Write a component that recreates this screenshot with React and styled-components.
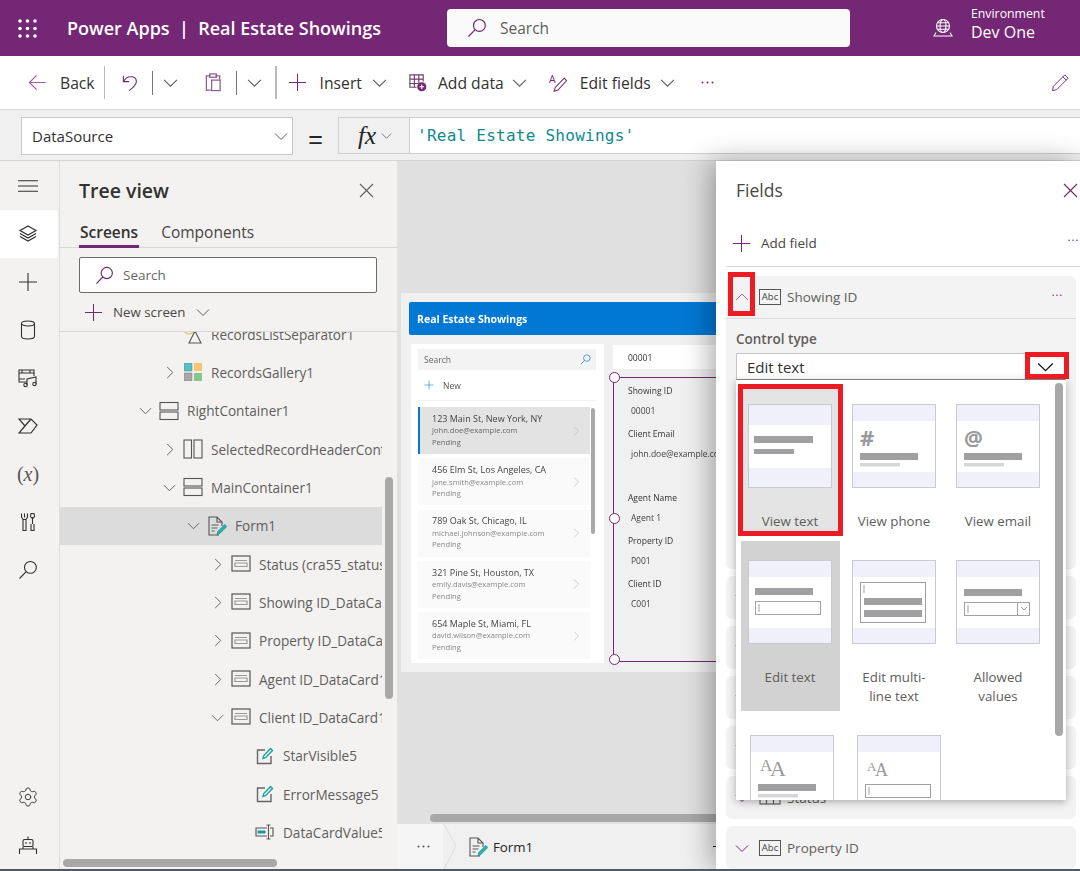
import React from "react";
import styled, { createGlobalStyle } from "styled-components";
import { Settings } from "lucide-react";

const PURPLE = "#742774";
const FONT = '"Open Sans", "Noto Sans", sans-serif';

const GlobalStyle = createGlobalStyle`
  html, body { margin: 0; padding: 0; height: 100%; background: #fff; overflow: hidden; }
  #root { height: 100%; }
  * { box-sizing: border-box; }
`;

// --- icons ---------------------------------------------------------------
const Svg = ({ size = 20, color = "currentColor", width = 1.1, children, box = 20 }) => (
  <svg width={size} height={size} viewBox={`0 0 ${box} ${box}`} fill="none" stroke={color} strokeWidth={width} style={{ flexShrink: 0, display: "block" }}>
    {children}
  </svg>
);

const Waffle = () => (
  <svg width="19" height="19" viewBox="0 0 19 19" fill="#fff" style={{ display: "block" }}>
    {[2, 9.5, 17].map((y) => [2, 9.5, 17].map((x) => <circle key={`${x}${y}`} cx={x} cy={y} r="1.8" />))}
  </svg>
);
const SearchIcon = ({ size, color, width = 1.2 }) => (
  <Svg size={size} color={color} width={width}>
    <circle cx="12.4" cy="7.4" r="5.9" />
    <path d="M8.2 11.6 1.5 18.5" />
  </Svg>
);
const Globe = () => (
  <Svg size={20} color="#fff" width={1.1}>
    <circle cx="10" cy="8" r="6.5" />
    <ellipse cx="10" cy="8" rx="3" ry="6.5" />
    <path d="M3.5 8h13M4.5 4.8h11M4.5 11.2h11M3 14.5l-2 3.5h18l-2-3.5" />
  </Svg>
);
const Chevron = ({ dir = "down", size = 14, color = "#605e5c", width = 1 }) => {
  const d = { down: "M1 4.5l6 6 6-6", up: "M1 10l6-6 6 6", right: "M4.5 1l6 6-6 6" }[dir];
  return (
    <Svg size={size} box={14} color={color} width={width}>
      <path d={d} />
    </Svg>
  );
};
const PlusIcon = ({ size = 19, color = PURPLE }) => (
  <Svg size={size} color={color} width={1.1}>
    <path d="M10 1v18M1 10h18" />
  </Svg>
);
const Close = ({ color = "#605e5c" }) => (
  <Svg size={15} box={15} color={color} width={1.1}>
    <path d="M1 1l13 13M14 1 1 14" />
  </Svg>
);
const Dots = ({ color = "#605e5c", w = 13 }) => (
  <svg width={w} height={(w * 3) / 13} viewBox="0 0 13 3" fill={color} style={{ display: "block" }}>
    <circle cx="1.5" cy="1.5" r="1" />
    <circle cx="6.5" cy="1.5" r="1" />
    <circle cx="11.5" cy="1.5" r="1" />
  </svg>
);
const Back = () => (
  <Svg size={19} color="#9c5f9c" width={1.2}>
    <path d="M18.5 10H1.5M9 2.5 1.5 10 9 17.5" />
  </Svg>
);
const Undo = () => (
  <Svg size={18} color={PURPLE} width={1.2}>
    <path d="M1.5 2v6.5H8M1.8 8.3C3.5 5 6 3 9.5 3c4 0 6.5 2.4 6.5 5.5 0 2.7-2.5 5.5-8 10" />
  </Svg>
);
const Clipboard = () => (
  <Svg size={19} color="#8f5b8f" width={1.3}>
    <path d="M7 3H2.5v15H7M12 3h4.5v4" />
    <rect x="6" y="1" width="7" height="3.5" />
    <rect x="8" y="7.5" width="9" height="11" />
  </Svg>
);
const AddData = () => (
  <Svg size={19} color="#6f3d6f" width={1.2}>
    <path d="M9 15H2V2h14v7M2 6.5h14M2 11h9M6.7 2v13M11.4 2v9" />
    <circle cx="14.5" cy="14.5" r="4.8" fill="#742774" stroke="none" />
    <path d="M14.5 12v5M12 14.5h5" stroke="#fff" />
  </Svg>
);
const EditFieldsIcon = () => (
  <Svg size={19} color={PURPLE} width={1.1}>
    <text x="0" y="10" fontSize="11" fontFamily="Open Sans" fill={PURPLE} stroke="none">A</text>
    <path d="M16 5.5l2.5 2.5-9 10-4 1.2 1-4z" />
  </Svg>
);
const Pen = () => (
  <Svg size={19} color={PURPLE} width={1}>
    <path d="M14.5 2l3.5 3.5L6 17.5 1.5 18.5 2.5 14zM12.5 4l3.5 3.5" />
  </Svg>
);
const Rail = {
  menu: (
    <Svg size={20}>
      <path d="M0 4.7h20M0 10h20M0 15.3h20" />
    </Svg>
  ),
  layers: (
    <Svg size={20} width={1.2}>
      <path d="M10 2 18 6.5 10 11 2 6.5zM2 9.5l8 4.5 8-4.5M2 12.5l8 4.5 8-4.5" />
    </Svg>
  ),
  plus: <PlusIcon size={20} color="#323130" />,
  data: (
    <Svg size={20}>
      <ellipse cx="10" cy="3.5" rx="6.5" ry="2.5" />
      <path d="M3.5 3.5v13c0 1.4 3 2.5 6.5 2.5s6.5-1.1 6.5-2.5v-13" />
    </Svg>
  ),
  media: (
    <Svg size={20}>
      <path d="M9 14H1V2h15v6M1 5h15M1 11h6M4 2v3M12 2v3" />
      <path d="M9 17V11l9-2v7" />
      <circle cx="7.5" cy="17" r="1.7" />
      <circle cx="16.5" cy="16" r="1.7" />
    </Svg>
  ),
  flows: (
    <Svg size={20} width={1.2}>
      <path d="M1 3h12l6 6-6 8H1l6-7zM13 3 6 11M19 9l-6 8" />
    </Svg>
  ),
  tools: (
    <Svg size={20}>
      <path d="M5 8v10.5h3V8M3.5 1.5v3.5L5 7.5h3l1.5-2.5V1.5M6.5 1.5v4" />
      <path d="M13 12v6.5h3V12M14.5 5v7M12.5 4.5l.5-3h3l.5 3-1 1.5h-2z" />
    </Svg>
  ),
  search: <SearchIcon size={20} color="#323130" width={1.1} />,
  robot: (
    <Svg size={20}>
      <path d="M10 1.5v3" />
      <rect x="5" y="4.5" width="10" height="7" rx="1.5" />
      <path d="M7.5 8h1M11.5 8h1" strokeWidth="1.8" />
      <path d="M1.5 19v-5h17v5M5 14v-2.5M15 14v-2.5" />
    </Svg>
  ),
};
const Stack = () => (
  <Svg size={20} color="#555">
    <rect x="1" y="1.5" width="18" height="7.5" />
    <rect x="1" y="11" width="18" height="7.5" />
  </Svg>
);
const Split = () => (
  <Svg size={20} color="#555">
    <rect x="1" y="1" width="7.5" height="18" />
    <rect x="11" y="1" width="8" height="18" />
  </Svg>
);
const Gallery = () => (
  <svg width="18" height="18" viewBox="0 0 18 18" style={{ display: "block", flexShrink: 0 }}>
    <rect width="8" height="8" fill="#4fc3c8" stroke="#777" strokeWidth=".5" />
    <rect x="10" width="8" height="8" fill="#f8c471" />
    <rect y="10" width="8" height="8" fill="#a8a8a8" stroke="#777" strokeWidth=".5" />
    <rect x="10" y="10" width="8" height="8" fill="#86c686" />
  </svg>
);
const Separator = () => (
  <Svg size={20} color="#555">
    <circle cx="6" cy="5" r="5" stroke="#f2b84b" />
    <path d="M6 19 12 7l6 12z" fill="#f3f2f1" />
    <path d="M13 4h5v4" stroke="#1aa5a5" />
  </Svg>
);
const FormIcon = () => (
  <Svg size={20} color="#555">
    <path d="M12 19H2V1h8l5 5v4M10 1v5h5" />
    <path d="M4.5 9h7M4.5 12h6M4.5 15h3" stroke="#888" strokeWidth="1.3" />
    <path d="M10 19l.8-3.5 7-7 2 2-7 7z" fill="#2bb3b3" stroke="#148f8f" strokeWidth=".8" />
  </Svg>
);
const CardIcon = () => (
  <Svg size={20} color="#555" width={1.2}>
    <rect x="1" y="2" width="18" height="15" />
    <path d="M4 6.5h12M4 9h12v3.5H4z" stroke="#999" />
  </Svg>
);
const EditBox = () => (
  <Svg size={18} box={18} color="#666" width={1.4}>
    <path d="M9 3H1.5v13.5H15V9" />
    <path d="M7 11.5l.8-3L14.500 1.500l2 2L9.500 10.700z" stroke="#1aa5a5" />
  </Svg>
);
const InputIcon = () => (
  <Svg size={20} color="#555">
    <path d="M12 6H1v8h11M15 6h3v8h-3" />
    <rect x="2.5" y="8.5" width="8" height="3" fill="#1a9a9a" stroke="none" />
    <path d="M13.5 3v14M11.5 3h4M11.5 17h4" />
  </Svg>
);
const TableIcon = () => (
  <Svg size={22} box={22} color="#555">
    <rect x="1" y="1" width="20" height="16" />
    <path d="M1 7h20M7.5 7v10M14.5 7v10" />
  </Svg>
);
const treeIcons = { separator: Separator, gallery: Gallery, stack: Stack, split: Split, form: FormIcon, card: CardIcon, edit: EditBox, input: InputIcon };

// --- thumbnails in the control type list -----------------------------------
const Thumb = ({ kind }) => {
  const top = kind === "viewText" ? 20 : 16;
  const bottom = kind === "viewText" ? 64 : 68;
  const bar = "#a0a0a2";
  const light = "#d6d6d6";
  return (
    <svg width="84" height="84" viewBox="0 0 84 84" style={{ display: "block", marginLeft: 7 }}>
      <rect x=".5" y=".5" width="83" height="83" fill="#fff" stroke="#c9c9d2" />
      <rect x="1" y="1" width="82" height={top} fill="#f0f0fa" />
      <rect x="1" y={bottom} width="82" height={83 - bottom} fill="#f0f0fa" />
      {kind === "viewText" && (
        <>
          <rect x="6" y="32" width="59" height="7" fill={bar} />
          <rect x="6" y="45" width="40" height="5" fill={bar} />
        </>
      )}
      {(kind === "phone" || kind === "email") && (
        <>
          <text x="8" y="42" fontSize={kind === "phone" ? 22 : 21} fontWeight="700" fontFamily="Open Sans" fill="#9a9a9c">{kind === "phone" ? "#" : "@"}</text>
          <rect x="8" y="49" width="58" height="7" fill={bar} />
          <rect x="8" y="59" width="40" height="3.5" fill={light} />
        </>
      )}
      {kind === "edit" && (
        <>
          <rect x="7" y="28" width="58" height="7" fill={bar} />
          <rect x="7.5" y="41.5" width="65" height="13" fill="#fff" stroke={bar} />
          <path d="M11 44v8" stroke={bar} />
        </>
      )}
      {kind === "multi" && (
        <>
          <rect x="8.5" y="22.5" width="65" height="40" fill="#fff" stroke={bar} />
          <path d="M12 25v8" stroke={bar} />
          <rect x="12" y="38" width="58" height="7" fill={bar} />
          <rect x="12" y="50" width="58" height="7" fill={bar} />
        </>
      )}
      {kind === "allowed" && (
        <>
          <rect x="8" y="29" width="58" height="7" fill={bar} />
          <rect x="8.5" y="42.5" width="65" height="13" fill="#fff" stroke={bar} />
          <path d="M12 45v8M61.5 43v12" stroke={bar} />
          <path d="M65 47l3 3 3-3" stroke={bar} fill="none" />
        </>
      )}
      {kind === "title" && (
        <>
          <text x="10" y="36" fontSize="17" fontFamily="Liberation Serif" fill="#9a9a9c">A</text>
          <text x="20" y="41" fontSize="22" fontFamily="Liberation Serif" fill="#9a9a9c">A</text>
          <rect x="8" y="49" width="58" height="7" fill={bar} />
          <rect x="8" y="59" width="40" height="3.5" fill={light} />
        </>
      )}
      {kind === "titleEdit" && (
        <>
          <text x="10" y="36" fontSize="13" fontFamily="Liberation Serif" fill="#9a9a9c">A</text>
          <text x="18" y="41" fontSize="18" fontFamily="Liberation Serif" fill="#9a9a9c">A</text>
          <rect x="8.5" y="49.5" width="65" height="13" fill="#fff" stroke={bar} />
          <path d="M12 52v8" stroke={bar} />
        </>
      )}
    </svg>
  );
};

// --- page frame --------------------------------------------------------------
const Page = styled.div`
  width: 1080px;
  height: 871px;
  display: flex;
  flex-direction: column;
  overflow: hidden;
  font-family: ${FONT};
  color: #323130;
  border-bottom: 2px solid #505a64;
`;

const Header = styled.header`
  height: 56px;
  flex-shrink: 0;
  background: ${PURPLE};
  color: #fff;
  display: flex;
  align-items: center;
  padding-left: 18px;
`;
const AppTitle = styled.div`
  margin-left: 30px;
  width: 380px;
  font-size: 18px;
  font-weight: 600;
  white-space: pre;
`;
const HeaderSearch = styled.div`
  width: 403px;
  height: 38px;
  background: #fafafa;
  border-radius: 4px;
  display: flex;
  align-items: center;
  gap: 13px;
  padding-left: 20px;
  color: #605e5c;
  font-size: 15.5px;
`;
const EnvIcon = styled.div`
  margin-left: 83px;
`;
const Env = styled.div`
  margin-left: 18px;
  padding-bottom: 7px;
  display: flex;
  flex-direction: column;
`;
const EnvLabel = styled.span`
  font-size: 12.3px;
  line-height: 15px;
`;
const EnvName = styled.span`
  font-size: 16px;
  line-height: 22px;
`;

const Toolbar = styled.div`
  height: 54px;
  flex-shrink: 0;
  display: flex;
  align-items: center;
  padding-left: 28px;
  border-bottom: 1px solid #d6d6d6;
  font-size: 15.7px;
`;
const ToolGroup = styled.div`
  display: flex;
  align-items: center;
  gap: ${(p) => p.$gap || 0}px;
  margin-left: ${(p) => p.$ml || 0}px;
  flex-shrink: 0;
`;
const PenSlot = styled.div`
  margin: 0 10px 0 auto;
`;
const ToolText = styled.span`
  color: #323130;
  margin-right: ${(p) => (p.$tight ? -3 : 0)}px;
`;
const ToolSep = styled.div`
  width: ${(p) => (p.$thin ? 1 : 1.5)}px;
  height: ${(p) => (p.$thin ? 24 : 33)}px;
  background: ${(p) => (p.$thin ? "#777" : "#bbb")};
  margin-left: ${(p) => p.$ml || 0}px;
  flex-shrink: 0;
`;

const FormulaBar = styled.div`
  height: 51px;
  flex-shrink: 0;
  background: #f0f0f0;
  border-bottom: 1px solid #d4d4d4;
  display: flex;
  align-items: flex-start;
  padding: 7px 0 0 21px;
`;
const PropSelect = styled.div`
  width: 272px;
  height: 38px;
  background: #fff;
  border: 1px solid #c8c8c8;
  display: flex;
  align-items: center;
  justify-content: space-between;
  padding: 0 4px 0 10px;
  font-size: 15px;
`;
const Equals = styled.div`
  width: 45px;
  text-align: center;
  font-family: "Liberation Sans", sans-serif;
  font-size: 25px;
  line-height: 44px;
  color: #222;
`;
const FxBox = styled.div`
  width: 72px;
  height: 37px;
  border: 1px solid #cfcfcf;
  display: flex;
  align-items: center;
  gap: 5px;
  padding-left: 19px;
`;
const Fx = styled.span`
  font-family: "Liberation Serif", serif;
  font-style: italic;
  font-size: 25px;
  line-height: 30px;
  color: #222;
`;
const FormulaInput = styled.div`
  flex: 1;
  height: 37px;
  background: #fff;
  border: 1px solid #cfcfcf;
  border-width: 1px 0 1px 0;
  display: flex;
  align-items: center;
  padding-left: 7px;
  font-family: "DejaVu Sans Mono", monospace;
  font-size: 16px;
  letter-spacing: 0.25px;
  color: #0e8a8f;
`;

const Workspace = styled.div`
  flex: 1;
  min-height: 0;
  display: flex;
`;

// --- left rail -----------------------------------------------------------------
const RailBar = styled.nav`
  width: 60px;
  flex-shrink: 0;
  background: #f3f2f1;
  border-right: 1px solid #dedcda;
  display: flex;
  flex-direction: column;
  padding-top: 1px;
`;
const RailItem = styled.div`
  height: 48px;
  width: 58px;
  display: flex;
  align-items: center;
  justify-content: center;
  padding-right: 2px;
  color: #323130;
  background: ${(p) => (p.$active ? "#fff" : "transparent")};
  border-radius: 0 4px 4px 0;
`;
const RailX = styled.span`
  font-family: "Liberation Serif", serif;
  font-size: 20px;
  color: #555;
`;
const RailXVar = styled.i`
  font-weight: 400;
`;
const RailBottom = styled.div`
  margin-top: auto;
`;

// --- tree view ------------------------------------------------------------------
const TreePanel = styled.aside`
  position: relative;
  width: 337px;
  flex-shrink: 0;
  background: #f3f2f1;
  display: flex;
  flex-direction: column;
  min-height: 0;
`;
const PanelHead = styled.div`
  height: 62px;
  flex-shrink: 0;
  display: flex;
  align-items: center;
  justify-content: space-between;
  padding: 0 23px 3px 19px;
`;
const TreeTitle = styled.h2`
  margin: 0;
  font-size: 19.5px;
  font-weight: 600;
  color: #323130;
`;
const Tabs = styled.div`
  height: 25px;
  flex-shrink: 0;
  display: flex;
  gap: 21px;
  padding-left: 19px;
  border-bottom: 1px solid #d9d7d5;
  font-size: 15.5px;
  line-height: 18px;
`;
const Tab = styled.div`
  height: 25px;
  padding: 0 1px;
  color: ${(p) => (p.$active ? "#323130" : "#484644")};
  font-weight: ${(p) => (p.$active ? 600 : 400)};
  border-bottom: ${(p) => (p.$active ? `3px solid ${PURPLE}` : "none")};
`;
const TreeSearch = styled.div`
  height: 36px;
  margin: 9px 20px 0 19px;
  flex-shrink: 0;
  background: #fff;
  border: 1px solid #6b6b6b;
  border-radius: 2px;
  display: flex;
  align-items: center;
  gap: 9px;
  padding-left: 15px;
  font-size: 13.5px;
  color: #666;
`;
const NewScreen = styled.div`
  height: 39px;
  flex-shrink: 0;
  display: flex;
  align-items: center;
  padding-left: 24px;
  border-bottom: 1px solid #d9d7d5;
  font-size: 13.3px;
  color: #484644;
`;
const NewScreenText = styled.span`
  margin: 0 11px 0 10px;
`;
const TreeScroll = styled.div`
  flex: 1;
  min-height: 0;
  width: 322px;
  overflow: hidden;
`;
const TreeList = styled.div`
  margin-top: -17px;
`;
const TreeRow = styled.div`
  height: 38.33px;
  display: flex;
  align-items: center;
  padding-left: ${(p) => 86 + p.$level * 24}px;
  background: ${(p) => (p.$selected ? "#dcdcdc" : "transparent")};
  font-size: 13.6px;
  color: #605e5c;
  white-space: nowrap;
  overflow: hidden;
`;
const ChevSlot = styled.div`
  width: 13px;
  flex-shrink: 0;
  margin-left: -7px;
  margin-right: 7px;
`;
const IconSlot = styled.div`
  width: 20px;
  flex-shrink: 0;
  margin-right: 8px;
  display: flex;
  justify-content: center;
`;
const Thumbnail = styled.div`
  position: absolute;
  background: #a8a8a8;
  border-radius: 4px;
  left: ${(p) => p.$left}px;
  bottom: ${(p) => p.$bottom}px;
  width: ${(p) => p.$w}px;
  height: ${(p) => p.$h}px;
`;

// --- canvas ---------------------------------------------------------------------
const Canvas = styled.main`
  position: relative;
  flex: 1;
  min-width: 0;
  display: flex;
  flex-direction: column;
  overflow: hidden;
  background: #e0e0e0;
`;
const Stage = styled.div`
  flex: 1;
  min-height: 0;
  padding: 132px 0 0 4px;
  overflow: hidden;
`;
const Preview = styled.div`
  width: 700px;
  height: 379px;
  background: #f0f0f0;
  padding: 9px 0 0 8px;
  filter: blur(0.3px);
`;
const PreviewBar = styled.div`
  height: 33px;
  background: #0078d4;
  color: #fff;
  border-radius: 2px 0 0 2px;
  display: flex;
  align-items: center;
  padding-left: 8px;
  font-size: 10.5px;
  font-weight: 700;
`;
const PreviewBody = styled.div`
  display: flex;
  gap: 9px;
  margin: 9px 0 0 2px;
`;
const RecordPane = styled.div`
  width: 193px;
  height: 319px;
  background: #fff;
  padding: 5px 8px 0 7px;
  overflow: hidden;
`;
const PreviewSearch = styled.div`
  height: 21px;
  background: #f3f3f3;
  display: flex;
  align-items: center;
  justify-content: space-between;
  padding: 0 5px 0 6px;
  font-size: 8.5px;
  color: #666;
`;
const PreviewNew = styled.div`
  height: 31px;
  display: flex;
  align-items: center;
  gap: 9px;
  padding-left: 6px;
  font-size: 8.5px;
  color: #555;
  border-bottom: 1px solid #f3f3f3;
`;
const RecordList = styled.div`
  position: relative;
  margin-top: 6px;
  display: flex;
  flex-direction: column;
  gap: 4.3px;
`;
const RecordItem = styled.div`
  width: 172px;
  height: 47px;
  flex-shrink: 0;
  display: flex;
  align-items: center;
  justify-content: space-between;
  padding: 0 9px 0 12px;
  background: ${(p) => (p.$active ? "#e3e3e3" : "#fafafa")};
  border-left: 2px solid ${(p) => (p.$active ? "#0078d4" : "transparent")};
`;
const RecordTitle = styled.div`
  font-size: 9px;
  line-height: 12.5px;
  color: #444;
  white-space: nowrap;
`;
const RecordSub = styled.div`
  font-size: 7.6px;
  line-height: 11.5px;
  color: ${(p) => (p.$active ? "#666" : "#888")};
`;
const ListScroll = styled.div`
  position: absolute;
  top: 1px;
  left: 173px;
  width: 4px;
  height: 126px;
  background: #a8a8a8;
  border-radius: 2px;
`;
const DetailPane = styled.div`
  flex: 1;
`;
const DetailTitle = styled.div`
  height: 24px;
  margin-top: 1px;
  background: #fff;
  display: flex;
  align-items: center;
  padding-left: 15px;
  font-size: 8.5px;
  color: #333;
`;
const FormBox = styled.div`
  position: relative;
  height: 285px;
  margin-top: 8px;
  border: 1px solid ${PURPLE};
  padding: 3px 0 0 14px;
`;
const Handle = styled.div`
  position: absolute;
  left: -5px;
  top: ${(p) => p.$top}px;
  width: 11px;
  height: 11px;
  border-radius: 50%;
  background: #fff;
  border: 1.3px solid ${PURPLE};
`;
const FormField = styled.div`
  height: ${(p) => (p.$tall ? 64 : 43)}px;
  font-size: 8.5px;
  color: #333;
`;
const FieldLabel = styled.div`
  line-height: 20px;
`;
const FieldValue = styled.div`
  line-height: 20px;
  padding-left: 3px;
  color: #444;
  white-space: nowrap;
`;
const CanvasBar = styled.div`
  position: absolute;
  left: 33px;
  right: 0;
  bottom: 47px;
  height: 8px;
  background: #a8a8a8;
  border-radius: 4px 0 0 4px;
`;
const BottomBar = styled.div`
  height: 45px;
  flex-shrink: 0;
  background: #f0f0f0;
  display: flex;
  align-items: center;
`;
const Crumb = styled.div`
  width: 46px;
  height: 45px;
  background: #f5f5f5;
  display: flex;
  align-items: center;
  justify-content: center;
  padding-left: 6px;
`;
const CrumbArrow = styled.svg`
  display: block;
  flex-shrink: 0;
`;
const CrumbName = styled.div`
  display: flex;
  align-items: center;
  gap: 5px;
  margin-left: 11px;
  font-size: 13.3px;
  color: #252423;
`;
const ZoomMark = styled.div`
  margin-left: auto;
  width: 3px;
  height: 1px;
  background: #222;
`;

// --- fields panel -----------------------------------------------------------------
const FieldsPanel = styled.aside`
  position: relative;
  z-index: 2;
  width: 364px;
  flex-shrink: 0;
  background: #fff;
  box-shadow: -6px 0 26px rgba(0, 0, 0, 0.32);
  padding: 0 4px 0 10px;
  overflow: hidden;
  display: flex;
  flex-direction: column;
`;
const FieldsHead = styled.div`
  height: 62px;
  flex-shrink: 0;
  display: flex;
  align-items: center;
  justify-content: space-between;
  padding: 0 2px 4px 10px;
  margin-right: -4px;
  font-size: 17.5px;
  color: #484644;
`;
const AddField = styled.div`
  height: 44px;
  flex-shrink: 0;
  margin: 0 -4px 9px 0;
  padding: 0 2px 3px 6px;
  display: flex;
  align-items: center;
  border-bottom: 1px solid #d6d6d6;
  font-size: 13.5px;
  color: #484644;
`;
const AddFieldText = styled.span`
  margin-left: 10px;
  flex: 1;
`;
const AddFieldDots = styled.div`
  margin-top: -6px;
`;
const FieldCard = styled.section`
  position: relative;
  flex-shrink: 0;
  margin-bottom: 7px;
  background: #f3f3f3;
  border-radius: 6px;
  z-index: ${(p) => (p.$open ? 2 : 1)};
  height: ${(p) => (p.$open ? 293 : 43)}px;
`;
const CardHead = styled.div`
  height: 43px;
  display: flex;
  align-items: center;
  padding: 0 14px 0 9px;
  border-bottom: ${(p) => (p.$open ? "1px solid #dcdcdc" : "none")};
  font-size: 13.5px;
  color: #605e5c;
`;
const AbcBox = styled.div`
  width: 22px;
  height: 16px;
  margin: 0 6px 0 10px;
  border: 1px solid #555;
  font-size: 9.5px;
  line-height: 14px;
  text-align: center;
  color: #444;
  flex-shrink: 0;
`;
const TableSlot = styled.div`
  margin: 0 6px 0 10px;
  flex-shrink: 0;
`;
const CardName = styled.span`
  flex: 1;
`;
const CardDots = styled.div`
  margin-top: -4px;
`;
const ControlLabel = styled.div`
  margin: 11px 0 0 10px;
  font-size: 13.5px;
  line-height: 18px;
  font-weight: 600;
  color: #605e5c;
`;
const ControlSelect = styled.div`
  margin: 5px 0 0 10px;
  width: 330px;
  height: 27px;
  background: #fff;
  border: 1px solid #c6c6c6;
  border-bottom-color: #8a8a8a;
  display: flex;
  align-items: center;
  justify-content: space-between;
  padding: 0 11px 0 10px;
  font-size: 15px;
  color: #323130;
`;
const Highlight = styled.div`
  position: absolute;
  left: ${(p) => p.$left}px;
  top: ${(p) => p.$top}px;
  width: ${(p) => p.$w}px;
  height: ${(p) => p.$h}px;
  border: 5px solid #ed1c24;
  pointer-events: none;
  z-index: 4;
`;
const Popover = styled.div`
  position: absolute;
  left: 10px;
  top: 104px;
  width: 330px;
  height: 420px;
  background: #fff;
  box-shadow: 0 2px 8px rgba(0, 0, 0, 0.3);
  overflow: hidden;
  padding: 5px 0 0 5px;
  z-index: 3;
`;
const PopScroll = styled.div`
  position: absolute;
  left: 319px;
  top: 3px;
  width: 8px;
  height: 353px;
  background: #a8a8a8;
  border-radius: 4px;
`;
const TileGrid = styled.div`
  display: grid;
  grid-template-columns: repeat(3, 99px);
  column-gap: 5px;
  row-gap: 5px;
`;
const Tile = styled.div`
  position: relative;
  padding-top: 19px;
  height: ${(p) => (p.$short ? 151 : 170)}px;
  background: ${(p) => (p.$state === "hover" ? "#e4e4e4" : p.$state === "current" ? "#d2d2d2" : "transparent")};
  margin-left: ${(p) => p.$shift || 0}px;
  width: 99px;
`;
const TileLabel = styled.div`
  margin-top: 24px;
  padding: 0 11px 0 10px;
  font-size: 13.3px;
  line-height: 19px;
  text-align: center;
  color: #605e5c;
`;

const treeRows = [
  { level: 1, icon: "separator", name: "RecordsListSeparator1" },
  { level: 1, icon: "gallery", name: "RecordsGallery1", chev: "right" },
  { level: 0, icon: "stack", name: "RightContainer1", chev: "down" },
  { level: 1, icon: "split", name: "SelectedRecordHeaderContainer1", chev: "right" },
  { level: 1, icon: "stack", name: "MainContainer1", chev: "down" },
  { level: 2, icon: "form", name: "Form1", chev: "down", selected: true },
  { level: 3, icon: "card", name: "Status (cra55_status)_DataCard1", chev: "right" },
  { level: 3, icon: "card", name: "Showing ID_DataCard1", chev: "right" },
  { level: 3, icon: "card", name: "Property ID_DataCard1", chev: "right" },
  { level: 3, icon: "card", name: "Agent ID_DataCard1", chev: "right" },
  { level: 3, icon: "card", name: "Client ID_DataCard1", chev: "down" },
  { level: 4, icon: "edit", name: "StarVisible5" },
  { level: 4, icon: "edit", name: "ErrorMessage5" },
  { level: 4, icon: "input", name: "DataCardValue5" },
];

const records = [
  ["123 Main St, New York, NY", "john.doe@example.com"],
  ["456 Elm St, Los Angeles, CA", "jane.smith@example.com"],
  ["789 Oak St, Chicago, IL", "michael.johnson@example.com"],
  ["321 Pine St, Houston, TX", "emily.davis@example.com"],
  ["654 Maple St, Miami, FL", "david.wilson@example.com"],
];

const formFields = [
  ["Showing ID", "00001"],
  ["Client Email", "john.doe@example.com", true],
  ["Agent Name", "Agent 1"],
  ["Property ID", "P001"],
  ["Client ID", "C001"],
];

const tiles = [
  { kind: "viewText", label: "View text", state: "hover", marked: true, short: true },
  { kind: "phone", label: "View phone", short: true },
  { kind: "email", label: "View email", short: true },
  { kind: "edit", label: "Edit text", state: "current" },
  { kind: "multi", label: "Edit multi-line text" },
  { kind: "allowed", label: "Allowed values" },
  { kind: "title", label: "", shift: 2 },
  { kind: "titleEdit", label: "", shift: 5 },
];

const collapsed = ["Client Email", "Agent Name", "Client ID", "Agent ID", "Status", "Property ID"];

export default function App() {
  return (
    <Page>
      <GlobalStyle />
      <Header>
        <Waffle />
        <AppTitle>Power Apps  |  Real Estate Showings</AppTitle>
        <HeaderSearch>
          <SearchIcon size={20} color={PURPLE} />
          Search
        </HeaderSearch>
        <EnvIcon>
          <Globe />
        </EnvIcon>
        <Env>
          <EnvLabel>Environment</EnvLabel>
          <EnvName>Dev One</EnvName>
        </Env>
      </Header>

      <Toolbar>
        <ToolGroup $gap={13}>
          <Back />
          <ToolText>Back</ToolText>
        </ToolGroup>
        <ToolSep $ml={9} />
        <ToolGroup $ml={17}><Undo /></ToolGroup>
        <ToolSep $thin $ml={12} />
        <ToolGroup $ml={10}><Chevron size={15} /></ToolGroup>
        <ToolGroup $ml={26}><Clipboard /></ToolGroup>
        <ToolSep $thin $ml={13} />
        <ToolGroup $ml={10}><Chevron size={15} /></ToolGroup>
        <ToolSep $ml={13} />
        <ToolGroup $ml={11} $gap={13}>
          <PlusIcon />
          <ToolText $tight>Insert</ToolText>
          <Chevron size={15} />
        </ToolGroup>
        <ToolGroup $ml={21} $gap={11}>
          <AddData />
          <ToolText $tight>Add data</ToolText>
          <Chevron size={15} />
        </ToolGroup>
        <ToolGroup $ml={22} $gap={12}>
          <EditFieldsIcon />
          <ToolText $tight>Edit fields</ToolText>
          <Chevron size={15} />
        </ToolGroup>
        <ToolGroup $ml={26}><Dots color={PURPLE} /></ToolGroup>
        <PenSlot><Pen /></PenSlot>
      </Toolbar>

      <FormulaBar>
        <PropSelect>
          DataSource
          <Chevron size={14} />
        </PropSelect>
        <Equals>=</Equals>
        <FxBox>
          <Fx>fx</Fx>
          <Chevron size={11} />
        </FxBox>
        <FormulaInput>'Real Estate Showings'</FormulaInput>
      </FormulaBar>

      <Workspace>
        <RailBar>
          <RailItem>{Rail.menu}</RailItem>
          <RailItem $active>{Rail.layers}</RailItem>
          <RailItem>{Rail.plus}</RailItem>
          <RailItem>{Rail.data}</RailItem>
          <RailItem>{Rail.media}</RailItem>
          <RailItem>{Rail.flows}</RailItem>
          <RailItem><RailX>(<RailXVar>x</RailXVar>)</RailX></RailItem>
          <RailItem>{Rail.tools}</RailItem>
          <RailItem>{Rail.search}</RailItem>
          <RailBottom>
            <RailItem><Settings size={22} strokeWidth={1} color="#323130" /></RailItem>
            <RailItem>{Rail.robot}</RailItem>
          </RailBottom>
        </RailBar>

        <TreePanel>
          <PanelHead>
            <TreeTitle>Tree view</TreeTitle>
            <Close />
          </PanelHead>
          <Tabs>
            <Tab $active>Screens</Tab>
            <Tab>Components</Tab>
          </Tabs>
          <TreeSearch>
            <SearchIcon size={19} color={PURPLE} />
            Search
          </TreeSearch>
          <NewScreen>
            <PlusIcon />
            <NewScreenText>New screen</NewScreenText>
            <Chevron size={14} />
          </NewScreen>
          <TreeScroll>
            <TreeList>
              {treeRows.map((row) => {
                const Icon = treeIcons[row.icon];
                return (
                  <TreeRow key={row.name} $level={row.level} $selected={row.selected}>
                    <ChevSlot>{row.chev && <Chevron dir={row.chev} size={13} />}</ChevSlot>
                    <IconSlot><Icon /></IconSlot>
                    {row.name}
                  </TreeRow>
                );
              })}
            </TreeList>
          </TreeScroll>
          <Thumbnail $left={325} $bottom={170} $w={8} $h={222} />
          <Thumbnail $left={3} $bottom={2} $w={214} $h={8} />
        </TreePanel>

        <Canvas>
          <Stage>
            <Preview>
              <PreviewBar>Real Estate Showings</PreviewBar>
              <PreviewBody>
                <RecordPane>
                  <PreviewSearch>
                    Search
                    <SearchIcon size={11} color="#0078d4" />
                  </PreviewSearch>
                  <PreviewNew>
                    <PlusIcon size={10} color="#0078d4" />
                    New
                  </PreviewNew>
                  <RecordList>
                    {records.map(([title, mail], i) => (
                      <RecordItem key={title} $active={i === 0}>
                        <div>
                          <RecordTitle>{title}</RecordTitle>
                          <RecordSub $active={i === 0}>{mail}</RecordSub>
                          <RecordSub $active={i === 0}>Pending</RecordSub>
                        </div>
                        <Chevron dir="right" size={10} color="#bbb" />
                      </RecordItem>
                    ))}
                    <ListScroll />
                  </RecordList>
                </RecordPane>
                <DetailPane>
                  <DetailTitle>00001</DetailTitle>
                  <FormBox>
                    <Handle $top={-6} />
                    <Handle $top={135} />
                    <Handle $top={276} />
                    {formFields.map(([label, value, tall]) => (
                      <FormField key={label} $tall={tall}>
                        <FieldLabel>{label}</FieldLabel>
                        <FieldValue>{value}</FieldValue>
                      </FormField>
                    ))}
                  </FormBox>
                </DetailPane>
              </PreviewBody>
            </Preview>
          </Stage>
          <CanvasBar />
          <BottomBar>
            <Crumb><Dots color="#555" /></Crumb>
            <CrumbArrow width="14" height="45" viewBox="0 0 14 45" fill="none" stroke="#dcdcdc">
              <path d="M1 0l12 22L1 45" />
            </CrumbArrow>
            <CrumbName>
              <FormIcon />
              Form1
            </CrumbName>
            <ZoomMark />
          </BottomBar>
        </Canvas>

        <FieldsPanel>
          <FieldsHead>
            Fields
            <Close color={PURPLE} />
          </FieldsHead>
          <AddField>
            <PlusIcon />
            <AddFieldText>Add field</AddFieldText>
            <AddFieldDots><Dots color={PURPLE} w={10} /></AddFieldDots>
          </AddField>

          <FieldCard $open>
            <CardHead $open>
              <Chevron dir="up" color="#a86aa8" />
              <AbcBox>Abc</AbcBox>
              <CardName>Showing ID</CardName>
              <CardDots><Dots color={PURPLE} w={10} /></CardDots>
            </CardHead>
            <ControlLabel>Control type</ControlLabel>
            <ControlSelect>
              Edit text
              <Chevron size={17} color="#111" />
            </ControlSelect>
            <Highlight $left={2} $top={-4} $w={27} $h={44} />
            <Highlight $left={299} $top={76} $w={44} $h={27} />
            <Popover>
              <TileGrid>
                {tiles.map((t) => (
                  <Tile key={t.kind} $state={t.state} $short={t.short} $shift={t.shift}>
                    <Thumb kind={t.kind} />
                    {t.label && <TileLabel>{t.label}</TileLabel>}
                    {t.marked && <Highlight $left={-3} $top={-1} $w={105} $h={152} />}
                  </Tile>
                ))}
              </TileGrid>
              <PopScroll />
            </Popover>
          </FieldCard>

          {collapsed.map((name) => (
            <FieldCard key={name}>
              <CardHead>
                <Chevron color={PURPLE} />
                {name === "Status" ? (
                  <TableSlot><TableIcon /></TableSlot>
                ) : (
                  <AbcBox>Abc</AbcBox>
                )}
                <CardName>{name}</CardName>
              </CardHead>
            </FieldCard>
          ))}
        </FieldsPanel>
      </Workspace>
    </Page>
  );
}
